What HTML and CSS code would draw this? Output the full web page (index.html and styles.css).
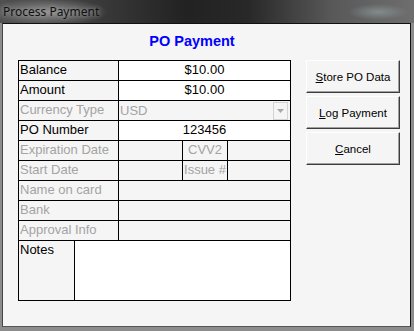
FILE: index.html
```html
<!DOCTYPE html>
<html lang="en">
<head>
  <meta charset="UTF-8" />
  <title>Process Payment</title>
  <link rel="stylesheet" href="styles.css">
</head>
<body>
  <div class="titlebar"><span class="caption">Process Payment</span></div>

  <div class="frame">
    <div class="client">
      <h1>PO Payment</h1>

      <div class="content">
        <div class="grid">
          <div class="label">Balance</div>
          <div class="value white center">$10.00</div>

          <div class="label">Amount</div>
          <div class="value white center">$10.00</div>

          <div class="label off">Currency Type</div>
          <div class="value off combo">
            <span>USD</span>
            <span class="arrow"><svg width="7" height="4" viewBox="0 0 7 4"><path d="M0 0h7L3.5 4z" fill="#a8a8a8"/></svg></span>
          </div>

          <div class="label">PO Number</div>
          <div class="value white center">123456</div>

          <div class="label off">Expiration Date</div>
          <div class="c3"></div>
          <div class="c4 off center">CVV2</div>
          <div class="c5"></div>

          <div class="label off">Start Date</div>
          <div class="c3"></div>
          <div class="c4 off center">Issue #</div>
          <div class="c5"></div>

          <div class="label off">Name on card</div>
          <div class="value"></div>

          <div class="label off">Bank</div>
          <div class="value"></div>

          <div class="label off">Approval Info</div>
          <div class="value"></div>

          <div class="notes-label">Notes</div>
          <div class="notes white"></div>
        </div>

        <div class="buttons">
          <button><u>S</u>tore PO Data</button>
          <button><u>L</u>og Payment</button>
          <button><u>C</u>ancel</button>
        </div>
      </div>
    </div>
  </div>
</body>
</html>
```

FILE: styles.css
```css
html, body {
  margin: 0;
  height: 331px;
  overflow: hidden;
}

body {
  display: flex;
  flex-direction: column;
  font-family: "Liberation Sans", Arial, sans-serif;
  background: #8c8c8c;
}

/* dark glass caption with a soft glow behind the text */
.titlebar {
  height: 23px;
  flex: none;
  display: flex;
  align-items: center;
  padding-left: 3px;
  background:
    radial-gradient(ellipse 60px 14px at 48px 12px, rgba(170,170,170,0.75), rgba(170,170,170,0) 100%),
    radial-gradient(ellipse 30px 8px at 378px 12px, rgba(150,165,165,0.6), rgba(150,165,165,0) 100%),
    linear-gradient(90deg, #505050 0%, #3c3c3c 22%, #222 45%, #282828 60%, #585858 80%, #6e6e6e 100%);
}

.caption {
  font-family: "Noto Sans", sans-serif;
  font-size: 12px;
  color: #101010;
  text-shadow: 0 0 4px #a8a8a8;
}

.frame {
  flex: 1;
  display: flex;
  padding: 0 3px 4px 2px;
}

.client {
  flex: 1;
  background: #f5f5f5;
  border: 1px solid #111;
  border-left-color: #444;
  border-bottom-color: #555;
}

h1 {
  margin: 0;
  height: 36px;
  box-sizing: border-box;
  padding: 9px 29px 0 0;
  text-align: center;
  font-size: 14.5px;
  line-height: 17px;
  color: #0000ff;
}

.content {
  display: flex;
  align-items: flex-start;
  padding-left: 15px;
  gap: 15px;
}

.grid {
  display: grid;
  grid-template-columns: 55px 43px 63px 44px 62px;
  grid-template-rows: repeat(9, 19px) 59px;
  gap: 1px;
  padding: 1px;
  background: #000;
  font-size: 13px;
  line-height: 18px;
}

.grid > div {
  background: #f5f5f5;
  padding: 0 1px;
  white-space: nowrap;
  overflow: hidden;
  color: #000;
}

.grid .label { grid-column: 1 / 3; }
.grid .value { grid-column: 3 / 6; }
.grid .c3 { grid-column: 3; }
.grid .c4 { grid-column: 4; padding: 0; }
.grid .c5 { grid-column: 5; }
.grid .notes-label { grid-column: 1; }
.grid .notes { grid-column: 2 / 6; }

.grid .white { background: #fff; }
.grid .off { color: #a4a4a4; }
.center { text-align: center; }

.combo {
  display: flex;
  justify-content: space-between;
  align-items: center;
}

.arrow {
  width: 13px;
  height: 16px;
  margin-right: 1px;
  border: 1px solid #d4d4d4;
  display: flex;
  align-items: center;
  justify-content: center;
}

.buttons {
  display: flex;
  flex-direction: column;
  gap: 3px;
}

button {
  width: 94px;
  height: 33px;
  background: #f5f5f5;
  border: 1px solid;
  border-color: #fff #3c3c3c #3c3c3c #fff;
  box-shadow: inset -1px -1px 0 #a0a0a0;
  font-family: "Liberation Sans", Arial, sans-serif;
  font-size: 11.5px;
  color: #000;
  padding: 0;
}
```
